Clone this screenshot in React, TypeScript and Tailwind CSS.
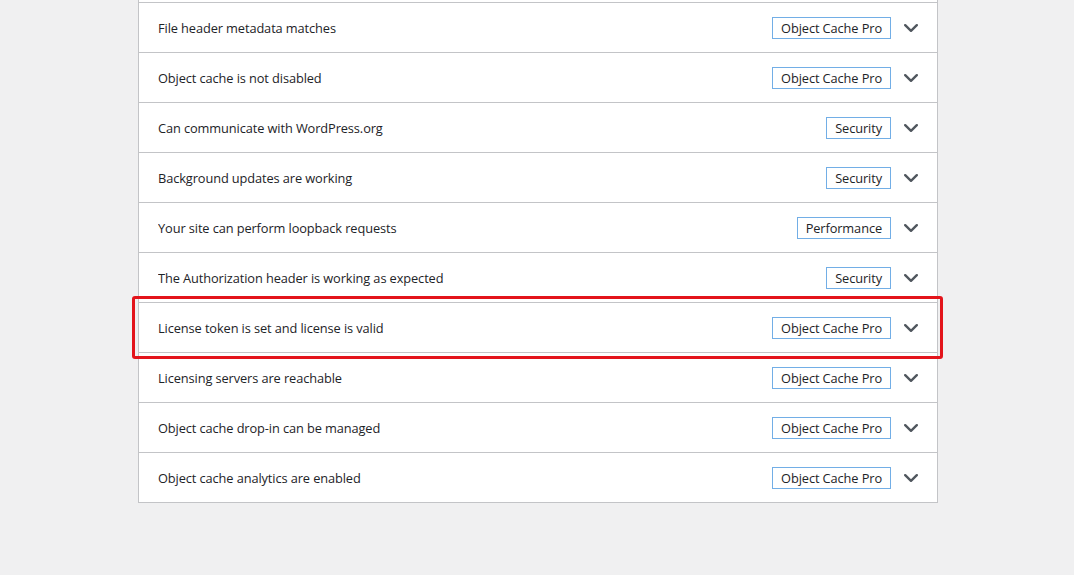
import { Fragment } from "react";

type Check = { label: string; badge: string; highlight?: boolean };

const CHECKS: Check[] = [
  { label: "File header metadata matches", badge: "Object Cache Pro" },
  { label: "Object cache is not disabled", badge: "Object Cache Pro" },
  { label: "Can communicate with WordPress.org", badge: "Security" },
  { label: "Background updates are working", badge: "Security" },
  { label: "Your site can perform loopback requests", badge: "Performance" },
  { label: "The Authorization header is working as expected", badge: "Security" },
  { label: "License token is set and license is valid", badge: "Object Cache Pro", highlight: true },
  { label: "Licensing servers are reachable", badge: "Object Cache Pro" },
  { label: "Object cache drop-in can be managed", badge: "Object Cache Pro" },
  { label: "Object cache analytics are enabled", badge: "Object Cache Pro" },
];

function Chevron() {
  return (
    <svg width="14" height="9" viewBox="0 0 14 9" aria-hidden className="block">
      <polyline points="1.2,1.2 7,6.8 12.8,1.2" fill="none" stroke="#50575e" strokeWidth="2.4" strokeLinecap="round" strokeLinejoin="round" />
    </svg>
  );
}

export default function App() {
  return (
    <div className="min-h-screen bg-[#f0f0f1] text-[#1d2327]" style={{ fontFamily: '"Open Sans", "Noto Sans", sans-serif' }}>
      <div className="ml-[138px] w-[800px] bg-white border-x border-b border-[#c3c4c7]">
        <div className="h-[2px]" />
        {CHECKS.map((c) => (
          <Fragment key={c.label}>
            <div className="relative flex items-center h-[50px] pt-[1px] border-t border-[#c3c4c7] pl-[19px]">
              <span className="flex-1 min-w-0 truncate pt-[2px] text-[12.8px] tracking-[-0.1px]">{c.label}</span>
              <span className="h-[22px] flex items-center px-[8px] border border-[#72aee6] text-[12.8px] tracking-[-0.1px] leading-none">{c.badge}</span>
              <span className="ml-[13px] mr-[19px] w-[14px] flex justify-center"><Chevron /></span>
              {c.highlight && (
                <div className="absolute -top-[7px] -left-[7px] w-[811px] h-[63px] border-[3px] border-[#e3141b] rounded-[3px] pointer-events-none" />
              )}
            </div>
          </Fragment>
        ))}
      </div>
    </div>
  );
}
